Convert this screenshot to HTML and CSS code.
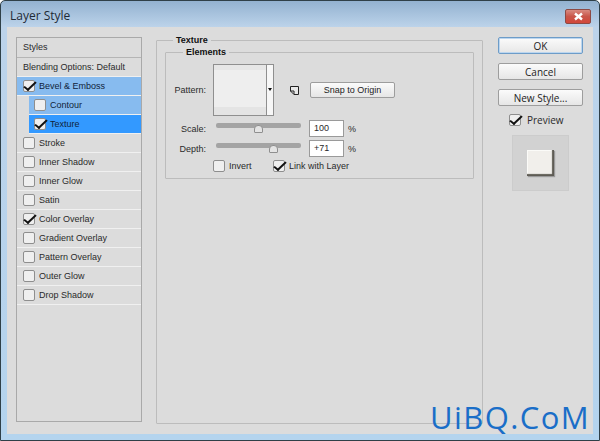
FILE: index.html
```html
<!DOCTYPE html>
<html lang="en">
<head>
    <meta charset="UTF-8">
    <meta name="viewport" content="width=device-width, initial-scale=1.0">
    <title>Layer Style</title>
    <link rel="stylesheet" href="styles.css">
</head>
<body>
    <div class="window">
        <div class="titlebar">
            <span class="title">Layer Style</span>
            <div class="close">
                <svg width="11" height="9" viewBox="0 0 11 9"><path d="M2 1.5 L9 7.5 M9 1.5 L2 7.5" stroke="#fff" stroke-width="2.4"/></svg>
            </div>
        </div>
        <div class="client">
            <div class="styles-panel">
                <div class="head-row">Styles</div>
                <div class="head-row">Blending Options: Default</div>
                <div class="row active"><span class="check on"></span>Bevel &amp; Emboss</div>
                <div class="row sub active"><span class="check"></span>Contour</div>
                <div class="row sub selected"><span class="check on"></span>Texture</div>
                <div class="row"><span class="check"></span>Stroke</div>
                <div class="row"><span class="check"></span>Inner Shadow</div>
                <div class="row"><span class="check"></span>Inner Glow</div>
                <div class="row"><span class="check"></span>Satin</div>
                <div class="row"><span class="check on"></span>Color Overlay</div>
                <div class="row"><span class="check"></span>Gradient Overlay</div>
                <div class="row"><span class="check"></span>Pattern Overlay</div>
                <div class="row"><span class="check"></span>Outer Glow</div>
                <div class="row"><span class="check"></span>Drop Shadow</div>
            </div>

            <fieldset class="group outer">
                <legend>Texture</legend>
                <fieldset class="group inner">
                    <legend>Elements</legend>
                    <div class="pattern-row">
                        <span class="label">Pattern:</span>
                        <div class="pattern">
                            <div class="swatch"></div>
                            <div class="arrow"></div>
                        </div>
                        <svg class="new-preset" width="11" height="11" viewBox="0 0 11 11"><path d="M1.5 1.5 H9.5 V9.5 H5 L1.5 6 Z M1.5 6 H5 V9.5" fill="#e8e8e8" stroke="#222" stroke-width="1"/></svg>
                        <button class="btn snap">Snap to Origin</button>
                    </div>
                    <div class="slider-row">
                        <span class="label">Scale:</span>
                        <div class="slider"><div class="thumb thumb-scale"></div></div>
                        <div class="field">100</div>
                        <span class="pct">%</span>
                    </div>
                    <div class="slider-row">
                        <span class="label">Depth:</span>
                        <div class="slider"><div class="thumb thumb-depth"></div></div>
                        <div class="field">+71</div>
                        <span class="pct">%</span>
                    </div>
                    <div class="options-row">
                        <span class="option invert"><span class="check"></span>Invert</span>
                        <span class="option"><span class="check on"></span>Link with Layer</span>
                    </div>
                </fieldset>
            </fieldset>

            <div class="actions">
                <button class="btn default">OK</button>
                <button class="btn">Cancel</button>
                <button class="btn">New Style...</button>
                <div class="preview-check"><span class="check on"></span>Preview</div>
                <div class="preview"><div class="bevel"></div></div>
            </div>
        </div>
        <div class="watermark">UiBQ.CoM</div>
    </div>
</body>
</html>
```

FILE: styles.css
```css
html, body {
    margin: 0;
    padding: 0;
}

body {
    width: 600px;
    height: 441px;
    overflow: hidden;
    font-family: 'Liberation Sans', sans-serif;
    font-size: 9px;
    color: #2a2a2a;
}

.window {
    position: relative;
    box-sizing: border-box;
    width: 600px;
    height: 441px;
    padding: 0 6px 6px 6px;
    display: flex;
    flex-direction: column;
    border: 1px solid #2f4048;
    border-radius: 5px 5px 0 0;
    background: linear-gradient(to bottom, #93b2d0 0, #bcd3ea 26px, #b4d4ee 100%);
}

.titlebar {
    height: 26px;
    display: flex;
    justify-content: space-between;
    align-items: flex-start;
    flex-shrink: 0;
}

.title {
    font-family: 'Open Sans', sans-serif;
    font-size: 12px;
    line-height: 14px;
    margin: 8px 0 0 3px;
    color: #1e2a36;
}

.close {
    width: 26px;
    height: 15px;
    margin: 8px 2px 0 0;
    box-sizing: border-box;
    border: 1px solid #8d4a44;
    border-radius: 2px;
    background: linear-gradient(to bottom, #d98a80 0, #c9564a 50%, #d2473a 100%);
    display: flex;
    align-items: center;
    justify-content: center;
}

.client {
    flex: 1;
    display: flex;
    align-items: flex-start;
    padding: 10px 0 0 9px;
    background: #dcdcdc;
}

/* Left list */
.styles-panel {
    box-sizing: border-box;
    width: 126px;
    height: 385px;
    border: 1px solid #a9a9a9;
    flex-shrink: 0;
}

.head-row {
    height: 20px;
    line-height: 19px;
    padding-left: 6px;
    box-sizing: border-box;
    border-bottom: 1px solid #b5b5b5;
}

.head-row + .head-row {
    height: 19px;
    border-bottom: 1px solid #f0f0f0;
}

.row {
    height: 19px;
    box-sizing: border-box;
    display: flex;
    align-items: center;
    padding-left: 6px;
    border-bottom: 1px solid #f0f0f0;
    gap: 4px;
}

.row.sub {
    margin-left: 12px;
    padding-left: 5px;
}

.row.active {
    background: #87bbef;
    color: #10233a;
}

.row.selected {
    background: #3399ff;
    color: #10233a;
}

.check {
    position: relative;
    display: inline-block;
    box-sizing: border-box;
    width: 12px;
    height: 12px;
    border: 1px solid #8e8e8e;
    border-radius: 2px;
    background: #efefef;
    flex-shrink: 0;
}

.check.on::after {
    content: "";
    position: absolute;
    left: 3px;
    top: -2px;
    width: 4px;
    height: 10px;
    border-right: 2px solid #111;
    border-bottom: 2px solid #111;
    transform: rotate(38deg) skewX(-8deg);
}

/* Middle group boxes */
.group {
    margin: 0;
    padding: 0;
    box-sizing: border-box;
    border: 1px solid #bcbcbc;
    border-radius: 1px;
}

.group legend {
    font-weight: bold;
    padding: 0 3px;
    line-height: 11px;
    color: #111;
}

.outer {
    width: 327px;
    height: 390px;
    margin: -3px 0 0 14px;
    padding: 0 8px;
    flex-shrink: 0;
}

.outer > legend {
    margin-left: 8px;
    padding-top: 1px;
}

.inner {
    height: 132px;
    margin-top: 1px;
}

.inner > legend {
    margin-left: 17px;
}

.label {
    width: 40px;
    text-align: right;
    flex-shrink: 0;
}

.pattern-row {
    display: flex;
    align-items: center;
    margin-top: 6px;
}

.pattern {
    box-sizing: border-box;
    width: 61px;
    height: 52px;
    margin-left: 7px;
    display: flex;
    border: 1px solid #8f8f8f;
    background: #f7f7f7;
}

.swatch {
    flex: 1;
    background: linear-gradient(to bottom, #e6e6e6 0, #e6e6e6 5px, #eeeeee 5px, #eeeeee 42px, #e4e4e4 42px);
    border-right: 1px solid #8f8f8f;
}

.arrow {
    width: 6px;
    position: relative;
}

.arrow::after {
    content: "";
    position: absolute;
    left: 1px;
    top: 23px;
    border-left: 2px solid transparent;
    border-right: 2px solid transparent;
    border-top: 3px solid #111;
}

.new-preset {
    margin-left: 15px;
}

.btn {
    box-sizing: border-box;
    height: 17px;
    padding: 0;
    font-family: 'Open Sans', sans-serif;
    font-size: 10px;
    color: #1c1c1c;
    border: 1px solid #9d9d9d;
    border-radius: 2px;
    background: linear-gradient(to bottom, #fbfbfb, #e6e6e6);
}

.snap {
    width: 85px;
    height: 16px;
    margin-left: 10px;
    font-family: inherit;
    font-size: 9px;
}

.slider-row {
    display: flex;
    align-items: center;
    height: 17px;
    margin-top: 3px;
}

.pattern-row + .slider-row {
    margin-top: 4px;
}

.slider {
    position: relative;
    box-sizing: border-box;
    width: 85px;
    height: 5px;
    margin: -7px 8px 0 10px;
    border-radius: 2px;
    background: #a4a4a4;
}

.thumb {
    position: absolute;
    top: 2px;
    width: 9px;
    height: 8px;
    box-sizing: border-box;
    background: #e4e4e4;
    border: 1px solid #8f8f8f;
    border-radius: 4px 4px 1px 1px;
}

.thumb-scale {
    left: 38px;
}

.thumb-depth {
    left: 53px;
}

.field {
    box-sizing: border-box;
    width: 35px;
    height: 17px;
    line-height: 15px;
    padding-left: 4px;
    border: 1px solid #9a9a9a;
    background: #fff;
}

.pct {
    margin-left: 4px;
}

.options-row {
    display: flex;
    margin: 3px 0 0 47px;
}

.option {
    display: flex;
    align-items: center;
    gap: 4px;
}

.invert {
    width: 60px;
}

/* Right column */
.actions {
    margin-left: 15px;
    width: 85px;
    display: flex;
    flex-direction: column;
    align-items: center;
    flex-shrink: 0;
}

.actions .btn {
    width: 85px;
    margin-bottom: 9px;
}

.actions .btn:nth-child(3) {
    margin-bottom: 7px;
}

.actions .default {
    border-color: #6d9cc8;
    box-shadow: 0 0 0 1px #bcd6ef inset;
}

.preview-check {
    display: flex;
    align-items: center;
    align-self: flex-start;
    gap: 6px;
    margin-left: 11px;
    font-family: 'Open Sans', sans-serif;
    font-size: 10px;
}

.preview {
    width: 57px;
    height: 56px;
    margin-top: 8px;
    background: #d2d2d2;
    border: 1px solid #cccccc;
    box-sizing: border-box;
    display: flex;
    align-items: center;
    justify-content: center;
}

.bevel {
    width: 27px;
    height: 26px;
    background: #f1efeb;
    box-shadow: inset -3px -3px 1px -1px #5f5c55, inset 1px 1px 0 #fbfbf8, 1px 1px 1px #9a9a9a;
}

.watermark {
    position: absolute;
    left: 429px;
    top: 396px;
    font-family: 'Open Sans', sans-serif;
    font-size: 31px;
    line-height: 40px;
    letter-spacing: 1.4px;
    color: #1a6ec8;
}
```
